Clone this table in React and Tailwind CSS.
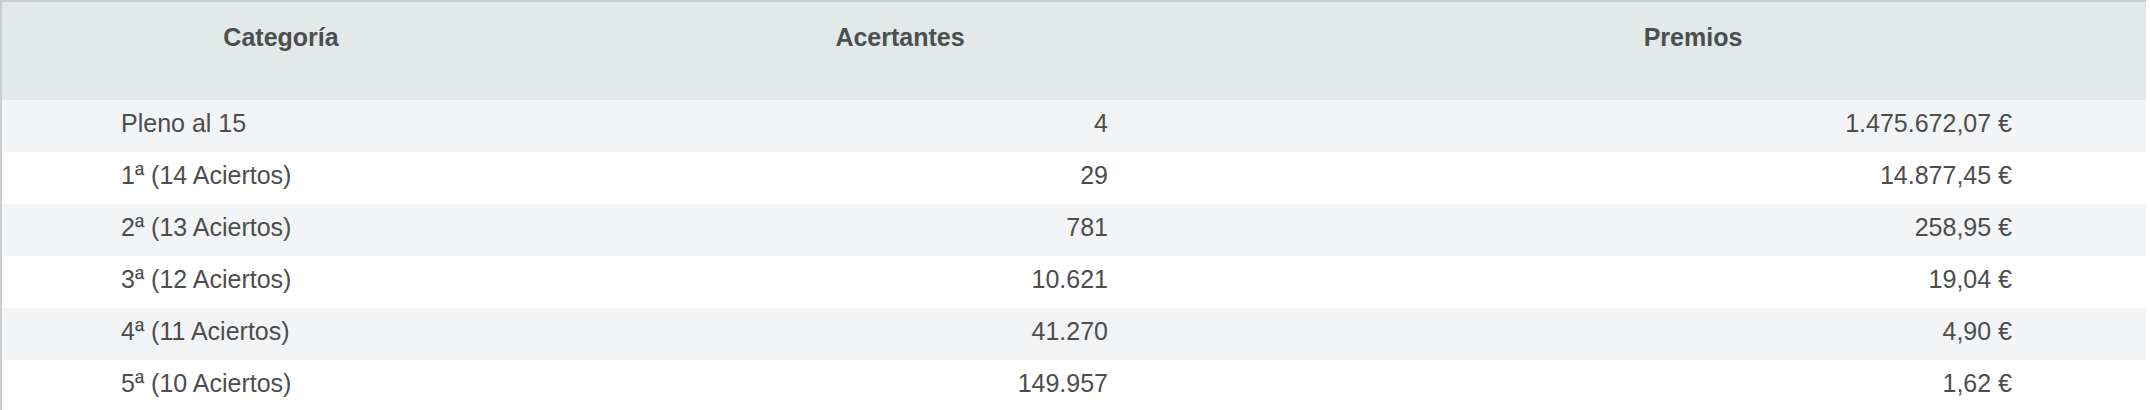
const rows = [
  { cat: "Pleno al 15", hits: "4", prize: "1.475.672,07 €" },
  { cat: "1ª (14 Aciertos)", hits: "29", prize: "14.877,45 €" },
  { cat: "2ª (13 Aciertos)", hits: "781", prize: "258,95 €" },
  { cat: "3ª (12 Aciertos)", hits: "10.621", prize: "19,04 €" },
  { cat: "4ª (11 Aciertos)", hits: "41.270", prize: "4,90 €" },
  { cat: "5ª (10 Aciertos)", hits: "149.957", prize: "1,62 €" },
];

export default function App() {
  return (
    <div className="bg-white h-[410px] overflow-hidden" style={{ fontFamily: '"Liberation Sans", Arial, sans-serif' }}>
      <div className="w-[2146px] border-t-2 border-l-2 border-[#c9cdcd] text-[25px] text-[#4d4d4d]">
        {/* cabecera */}
        <div className="grid grid-cols-[558px_680px_1fr] h-[98px] bg-[#e2e9e8] font-bold text-[#4b4f50]">
          <div className="text-center pt-[17px]">Categoría</div>
          <div className="text-center pt-[17px]">Acertantes</div>
          <div className="text-center pt-[17px]">Premios</div>
        </div>
        {rows.map((r, i) => (
          <div
            key={r.cat}
            className={`grid grid-cols-[558px_680px_1fr] h-[52px] ${i % 2 === 0 ? "bg-[#f2f4f5]" : "bg-white"}`}
          >
            <div className="pl-[119px] pt-[5px]">{r.cat}</div>
            <div className="text-right pr-[132px] pt-[5px]">{r.hits}</div>
            <div className="text-right pr-[134px] pt-[5px]">{r.prize}</div>
          </div>
        ))}
      </div>
    </div>
  );
}
